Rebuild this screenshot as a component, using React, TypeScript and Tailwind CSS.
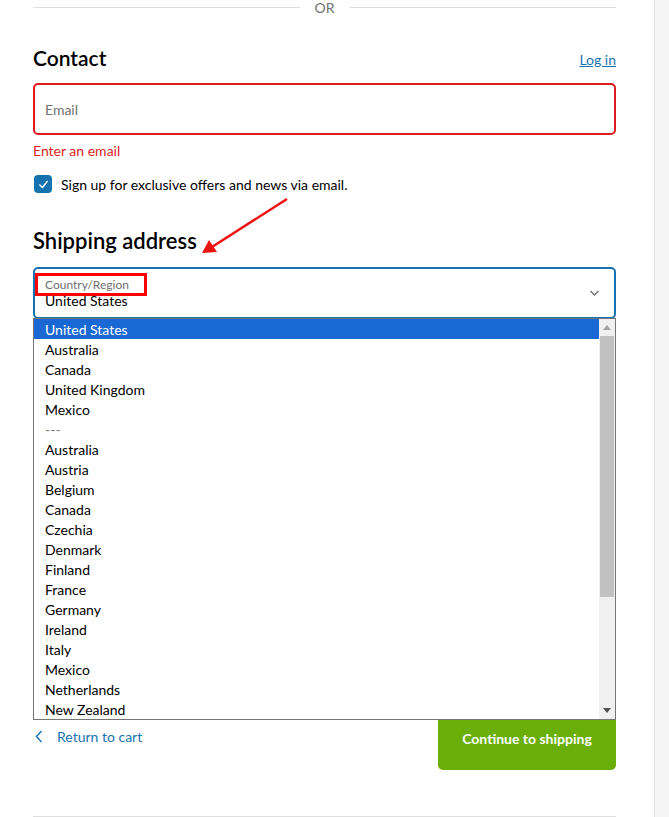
import React from "react";

const items = [
  "United States",
  "Australia",
  "Canada",
  "United Kingdom",
  "Mexico",
  "---",
  "Australia",
  "Austria",
  "Belgium",
  "Canada",
  "Czechia",
  "Denmark",
  "Finland",
  "France",
  "Germany",
  "Ireland",
  "Italy",
  "Mexico",
  "Netherlands",
  "New Zealand",
];

export default function App() {
  return (
    <div className="flex w-[669px] h-[817px] overflow-hidden bg-white" style={{ fontFamily: "Lato, 'Open Sans', sans-serif" }}>
      <main className="w-[654px] shrink-0 pl-[33px] pr-[38px] relative">
        {/* OR divider */}
        <div className="flex items-center h-[17px] -mt-[1px]">
          <div className="flex-1 h-px bg-[#dedede]" />
          <span className="px-[15px] text-[14px] text-[#707070] leading-none">OR</span>
          <div className="flex-1 h-px bg-[#dedede]" />
        </div>

        {/* Contact */}
        <div className="flex items-center justify-between mt-[28px] h-[26px]">
          <h2 className="text-[21px] font-semibold text-[#000] leading-none">Contact</h2>
          <a className="text-[14px] text-[#1773b0] underline mt-[4px]">Log in</a>
        </div>

        <div className="mt-[13px] h-[52px] rounded-[5px] border-2 border-[#dd1d1d] flex items-center px-[10px]">
          <span className="text-[14px] text-[#707070]">Email</span>
        </div>
        <div className="mt-[7px] text-[14px] text-[#dd1d1d] leading-[17px]">Enter an email</div>

        <div className="flex items-center mt-[16px] h-[18px]">
          <div className="w-[18px] h-[18px] ml-[1px] rounded-[4px] bg-[#1773b0] flex items-center justify-center">
            <svg width="11" height="11" viewBox="0 0 12 12" fill="none">
              <path d="M2 6.5 L4.8 9.2 L10 2.8" stroke="white" strokeWidth="1.6" strokeLinecap="round" strokeLinejoin="round" />
            </svg>
          </div>
          <span className="ml-[9px] text-[14px] text-[#000]">Sign up for exclusive offers and news via email.</span>
        </div>

        {/* Shipping address */}
        <h2 className="mt-[35px] text-[22px] font-semibold text-[#000] leading-[26px]">Shipping address</h2>

        <div className="relative mt-[13px]">
          <div className="h-[52px] rounded-[5px] border-2 border-[#1773b0] relative px-[10px] pt-[8px]">
            <div className="text-[12px] text-[#707070] leading-[15px]">Country/Region</div>
            <div className="text-[14px] text-[#000] leading-[17px]">United States</div>
            <svg className="absolute right-[14px] top-[20px]" width="11" height="8" viewBox="0 0 11 8" fill="none">
              <path d="M1.5 2 L5.5 6 L9.5 2" stroke="#707070" strokeWidth="1.3" />
            </svg>
          </div>
          {/* red annotation box */}
          <div className="absolute left-[2px] top-[6px] w-[112px] h-[23px] border-[3px] border-[#ff0000]" />

          {/* dropdown */}
          <div className="absolute left-0 right-0 top-[51px] h-[402px] bg-white border border-[#767676] flex z-10">
            <div className="flex-1">
              {items.map((it, i) => (
                <div
                  key={i}
                  className={
                    i === 0
                      ? "h-[20px] leading-[21px] pl-[11px] text-[14px] bg-[#1a68d4] text-white"
                      : i === 5
                      ? "h-[20px] leading-[21px] pl-[11px] text-[14px] text-[#808080]"
                      : "h-[20px] leading-[21px] pl-[11px] text-[14px] text-[#000]"
                  }
                >
                  {it}
                </div>
              ))}
            </div>
            <div className="w-[16px] bg-[#f0f0f0] flex flex-col items-center">
              <div className="h-[17px] flex items-center justify-center">
                <svg width="8" height="5" viewBox="0 0 8 5"><path d="M0 5 L4 0 L8 5 Z" fill="#a3a3a3" /></svg>
              </div>
              <div className="w-[14px] h-[261px] bg-[#c1c1c1]" />
              <div className="flex-1" />
              <div className="h-[17px] flex items-center justify-center">
                <svg width="8" height="5" viewBox="0 0 8 5"><path d="M0 0 L4 5 L8 0 Z" fill="#505050" /></svg>
              </div>
            </div>
          </div>
        </div>

        {/* covered fields */}
        <div className="h-[395px]" />

        <div className="flex items-start justify-between">
          <a className="flex items-center mt-[12px] text-[14px] text-[#1773b0]">
            <svg className="ml-[2px]" width="8" height="13" viewBox="0 0 8 13" fill="none">
              <path d="M6.5 1 L1.5 6.5 L6.5 12" stroke="#1773b0" strokeWidth="1.4" />
            </svg>
            <span className="ml-[14px]">Return to cart</span>
          </a>
          <button className="w-[178px] h-[56px] rounded-[5px] bg-[#6aae08] text-white text-[14px] font-bold pt-[18px] leading-none flex justify-center items-start">
            Continue to shipping
          </button>
        </div>

        <div className="mt-[46px] h-px bg-[#dedede]" />

        {/* red arrow */}
        <svg className="absolute left-0 top-0 pointer-events-none" width="654" height="300" viewBox="0 0 654 300">
          <line x1="287" y1="199" x2="212" y2="247" stroke="#ee1111" strokeWidth="2.5" />
          <path d="M202 253 L209 240 L217 252 Z" fill="#ee1111" />
        </svg>
      </main>
      <aside className="flex-1 bg-[#f5f5f5] border-l border-[#e1e1e1]" />
    </div>
  );
}
